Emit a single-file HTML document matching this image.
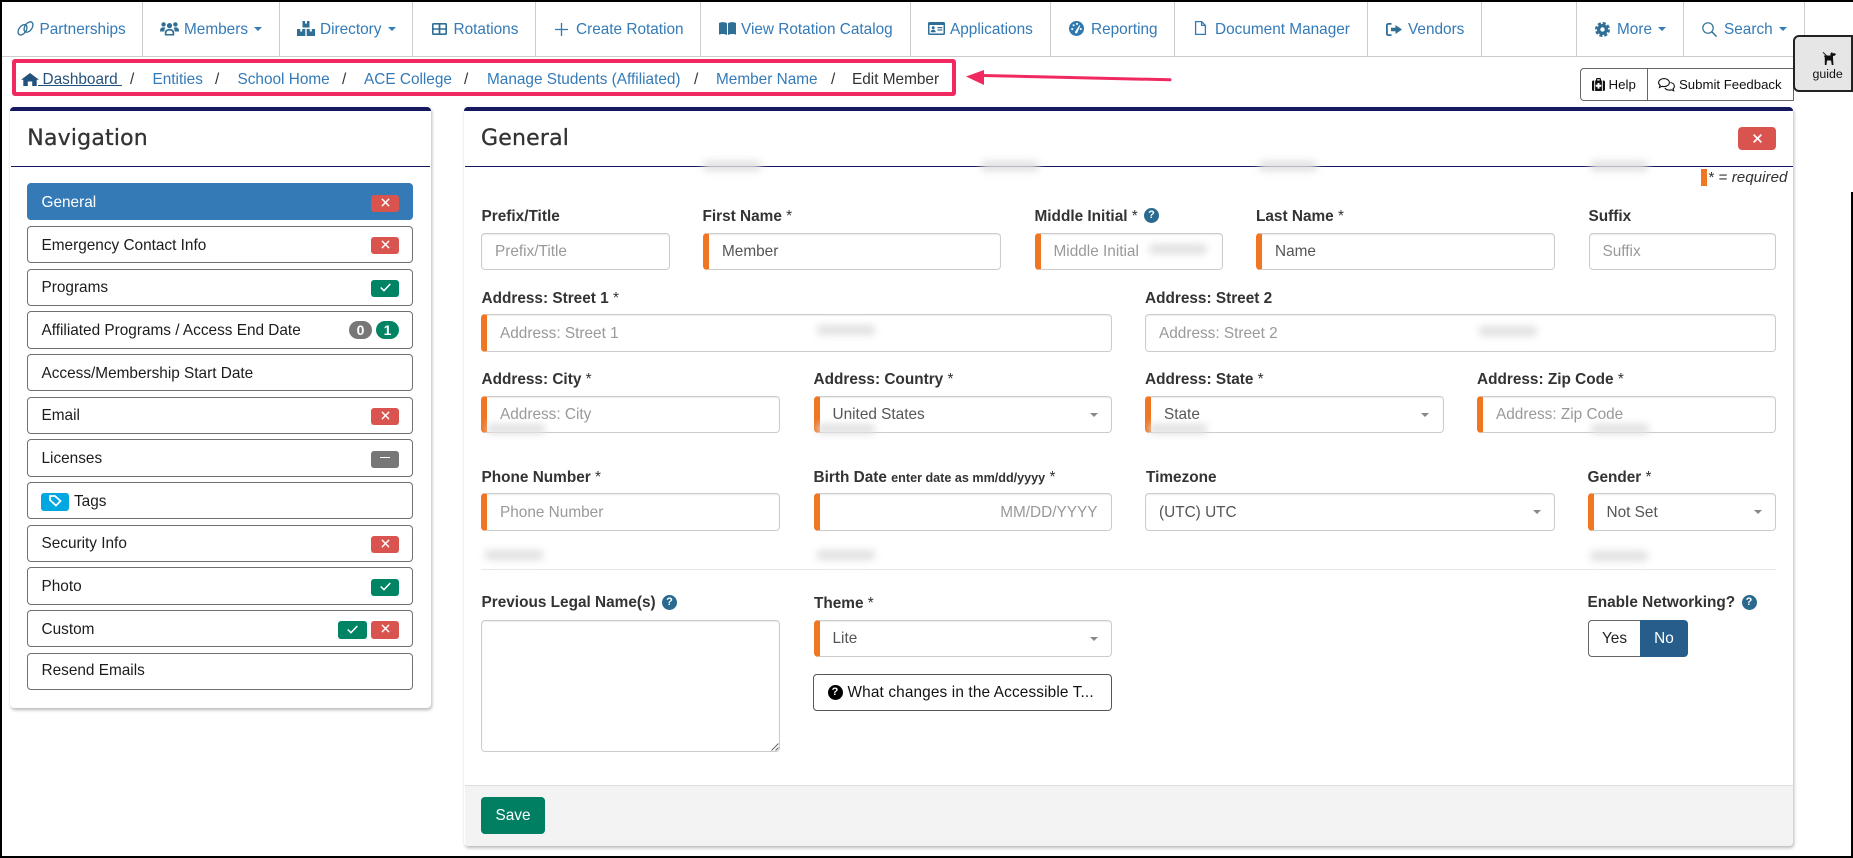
<!DOCTYPE html>
<html lang="en">
<head>
<meta charset="utf-8">
<title>Edit Member</title>
<style>
html,body{margin:0;padding:0;background:#fff}
body{position:relative;width:1853px;height:858px;overflow:hidden;font-family:"Liberation Sans",Arial,sans-serif;font-size:15.36px;color:#333}
*{box-sizing:border-box}
.a{position:absolute}
.t{position:absolute;white-space:nowrap;line-height:20px}
.n{color:#337ab7;top:20px}
.v{position:absolute;top:2px;width:1px;height:54px;background:#ccc}
.ic{position:absolute;overflow:visible}
.car{position:absolute;width:0;height:0;border-left:4px solid transparent;border-right:4px solid transparent;border-top:4px solid #337ab7;top:27px}
.b{top:70px;color:#337ab7}
.s{top:70px;color:#333}
.panel{position:absolute;background:#fff;border-top:4px solid #16195e;border-radius:4px;box-shadow:1px 2px 3px rgba(0,0,0,.28)}
.it{position:absolute;left:27px;width:386px;border:1px solid #707070;border-radius:4px;color:#1c1c1c}
.it span{position:absolute;left:13.5px;white-space:nowrap;line-height:20px}
.bd{position:absolute;border-radius:3px;width:28px;height:17px}
.r{background:#d9534f}.g{background:#008463}.gr{background:#777}
.c{position:absolute;border-radius:9px;width:23px;height:18px;color:#fff;font-weight:bold;font-size:14px;text-align:center;line-height:18px}
.l{position:absolute;white-space:nowrap;line-height:20px;font-weight:bold;color:#333}
.l i{font-style:normal;font-weight:normal}
.l small{font-size:12.6px}
.i{position:absolute;border:1px solid #ccc;border-radius:4px;padding-left:13px;color:#999;white-space:nowrap;box-shadow:inset 0 1px 1px rgba(0,0,0,.075);background:#fff}
.q{border-left:6px solid #f07622}
.val{color:#555}
.sc{position:absolute;width:0;height:0;border-left:4px solid transparent;border-right:4px solid transparent;border-top:4px solid #888}
.h{position:absolute;width:15px;height:15px;border-radius:50%;background:#2a6a8f;color:#fff;font-weight:bold;font-size:11px;line-height:15px;text-align:center}
.sm{position:absolute;height:10px;width:58px;background:#e0e0e0;filter:blur(4px);border-radius:4px}
.ttl{font-family:'DejaVu Sans',sans-serif;font-size:22px;line-height:28px;color:#333;letter-spacing:.2px;-webkit-text-stroke:.3px #333}
</style>
</head>
<body>

<!-- screenshot frame -->
<div class="a" style="left:0;top:0;width:1853px;height:2px;background:#000"></div>
<div class="a" style="left:0;top:0;width:2px;height:858px;background:#000"></div>
<div class="a" style="left:0;top:856px;width:1853px;height:2px;background:#000"></div>
<div class="a" style="left:1851px;top:192px;width:2px;height:666px;background:#000"></div>

<!-- top nav -->
<div class="a" style="left:2px;top:55.5px;width:1803px;height:1px;background:#ccc"></div>
<div class="v" style="left:142px"></div>
<div class="v" style="left:279px"></div>
<div class="v" style="left:412px"></div>
<div class="v" style="left:535px"></div>
<div class="v" style="left:700px"></div>
<div class="v" style="left:910px"></div>
<div class="v" style="left:1050px"></div>
<div class="v" style="left:1174px"></div>
<div class="v" style="left:1367px"></div>
<div class="v" style="left:1481px"></div>
<div class="v" style="left:1576px"></div>
<div class="v" style="left:1683px"></div>
<div class="v" style="left:1804px"></div>

<svg class="ic" style="left:16px;top:21px" width="19" height="15" viewBox="0 0 19 15" fill="none" stroke="#2f6f96" stroke-width="1.300"><ellipse cx="6.500" cy="8.800" rx="3.600" ry="5.800" transform="rotate(35 6.500 8.800)"/><ellipse cx="12.500" cy="6" rx="3.600" ry="5.800" transform="rotate(35 12.500 6)"/></svg>
<div class="t n" style="left:39.5px">Partnerships</div>

<svg class="ic" style="left:160px;top:21px" width="19" height="15" viewBox="0 0 19 15" fill="#2f6f96"><circle cx="3.600" cy="3.400" r="2.200"/><circle cx="15.400" cy="3.400" r="2.200"/><circle cx="9.500" cy="4.600" r="2.600"/><path d="M0 10.500C0 7.500 1 6.400 3.600 6.400c.9 0 1.400.2 1.800.5-.9 1-1.100 2.300-1.100 3.600z"/><path d="M19 10.500C19 7.500 18 6.400 15.400 6.400c-.9 0-1.400.2-1.800.5.9 1 1.100 2.300 1.100 3.600z"/><path d="M4.800 14.500v-2.700c0-2.500 1.600-3.800 4.700-3.800s4.700 1.300 4.700 3.800v2.700z"/><path d="M6.500 13V11.800c0-1.500 1-2.200 3-2.200s3 .7 3 2.200V13z" fill="#fff"/></svg>
<div class="t n" style="left:184px">Members</div>
<div class="car" style="left:254px"></div>

<svg class="ic" style="left:297px;top:21px" width="18" height="15" viewBox="0 0 18 15" fill="#2f6f96"><path d="M5.500 0h7v6.500h-7z"/><path d="M0 8h8.300v7H0zM9.700 8H18v7H9.700z"/><path d="M8 0h2v2.500H8zM3.200 8h2v2.500h-2zM12.800 8h2v2.500h-2z" fill="#fff"/></svg>
<div class="t n" style="left:320px">Directory</div>
<div class="car" style="left:388px"></div>

<svg class="ic" style="left:432px;top:23px" width="15" height="12" viewBox="0 0 15 12"><rect width="15" height="12" rx="1.500" fill="#2f6f96"/><path d="M1.600 1.600h5v3.700h-5zM8.400 1.600h5v3.700h-5zM1.600 6.800h5v3.600h-5zM8.400 6.800h5v3.600h-5z" fill="#fff"/></svg>
<div class="t n" style="left:453.5px">Rotations</div>

<svg class="ic" style="left:555px;top:23px" width="13" height="13" viewBox="0 0 13 13" stroke="#2f78b0" stroke-width="1.300"><path d="M6.500 0v13M0 6.500h13"/></svg>
<div class="t n" style="left:576px">Create Rotation</div>

<svg class="ic" style="left:719px;top:22px" width="17" height="13" viewBox="0 0 17 13" fill="#2f6f96"><path d="M0 1C2.500-.2 5.800-.2 8 1.200V13C5.800 11.700 2.500 11.700 0 12.600zM17 1C14.500-.2 11.200-.2 9 1.200V13c2.200-1.300 5.500-1.300 8-.4z"/></svg>
<div class="t n" style="left:741px">View Rotation Catalog</div>

<svg class="ic" style="left:928px;top:22px" width="17" height="13" viewBox="0 0 17 13"><rect width="17" height="13" rx="1.500" fill="#2f6f96"/><rect x="1.500" y="3" width="14" height="8.500" fill="#fff"/><circle cx="5.200" cy="5.700" r="1.500" fill="#2f6f96"/><path d="M2.700 10.300c0-1.600 1-2.500 2.500-2.500s2.500.9 2.500 2.500zM9.500 5h4.800v1.200H9.500zM9.500 7.400h4.800v1.200H9.500z" fill="#2f6f96"/></svg>
<div class="t n" style="left:950px">Applications</div>

<svg class="ic" style="left:1068.500px;top:21px" width="15" height="15" viewBox="0 0 14 14"><circle cx="7" cy="7" r="7" fill="#2f78b0"/><g fill="#fff"><circle cx="3" cy="7.500" r="1"/><circle cx="4.300" cy="4" r="1"/><circle cx="7.500" cy="2.700" r="1"/><circle cx="11" cy="7.500" r="1"/><path d="M6 9.500L9.800 3.800l.7.400L8 10.300a1.200 1.200 0 1 1-2-.8z"/></g></svg>
<div class="t n" style="left:1091px">Reporting</div>

<svg class="ic" style="left:1195px;top:21px" width="11" height="14" viewBox="0 0 11 14" fill="none" stroke="#337ab7" stroke-width="1.300"><path d="M.6.600h6l3.800 3.800v9H.6zM6.600.6v3.800h3.800"/></svg>
<div class="t n" style="left:1215px">Document Manager</div>

<svg class="ic" style="left:1386px;top:22.500px" width="16" height="13" viewBox="0 0 16 13" fill="#2f6f96"><path d="M5.500 0H2.500C1 0 0 1 0 2.500v8C0 12 1 13 2.500 13h3v-1.800h-3c-.4 0-.7-.3-.7-.7v-8c0-.4.300-.7.700-.7h3z"/><path d="M9.500 2L16 6.500 9.500 11V8.300H5V4.700h4.500z"/></svg>
<div class="t n" style="left:1408px">Vendors</div>

<svg class="ic" style="left:1595px;top:21.500px" width="15" height="15" viewBox="0 0 15 15"><circle cx="7.500" cy="7.500" r="5.500" fill="#2f6f96"/><circle cx="7.500" cy="7.500" r="6.200" fill="none" stroke="#2f6f96" stroke-width="2.600" stroke-dasharray="3 1.870"/><circle cx="7.500" cy="7.500" r="2.200" fill="#fff"/></svg>
<div class="t n" style="left:1617px">More</div>
<div class="car" style="left:1658px"></div>

<svg class="ic" style="left:1702px;top:21.500px" width="15" height="15" viewBox="0 0 15 15" fill="none" stroke="#2f6f96" stroke-width="1.200"><circle cx="6" cy="6" r="5.200"/><path d="M9.800 9.800l4.800 4.800" stroke-width="1.400"/></svg>
<div class="t n" style="left:1724px">Search</div>
<div class="car" style="left:1779px"></div>

<!-- breadcrumb -->
<div class="a" style="left:12px;top:59px;width:944px;height:37px;border:4px solid #f02a61;border-radius:3px"></div>
<svg class="ic" style="left:20.500px;top:72.500px" width="18" height="13" viewBox="0 0 18 13" fill="#23527c"><path d="M9 0l9 6.800h-2.300V13h-4.500V8.500H6.800V13H2.300V6.800H0z"/></svg>
<div class="t" style="left:42.500px;top:70px;color:#23527c">Dashboard</div>
<div class="a" style="left:38px;top:85px;width:84px;height:1px;background:#23527c"></div>
<div class="t s" style="left:130px">/</div>
<div class="t b" style="left:152.500px">Entities</div>
<div class="t s" style="left:215px">/</div>
<div class="t b" style="left:237.500px">School Home</div>
<div class="t s" style="left:342px">/</div>
<div class="t b" style="left:364px">ACE College</div>
<div class="t s" style="left:464px">/</div>
<div class="t b" style="left:487px">Manage Students (Affiliated)</div>
<div class="t s" style="left:694px">/</div>
<div class="t b" style="left:716px">Member Name</div>
<div class="t s" style="left:831px">/</div>
<div class="t" style="left:852px;top:70px;color:#333">Edit Member</div>

<!-- arrow -->
<svg class="ic" style="left:960px;top:65px" width="220" height="26" viewBox="0 0 220 26"><path d="M22 10.500L210 14.800" stroke="#f02a61" stroke-width="3" stroke-linecap="round"/><path d="M6 11.500L24 5v15z" fill="#f02a61"/></svg>

<!-- help buttons -->
<div class="a" style="left:1580px;top:68px;width:214px;height:33px;border:1px solid #666;border-radius:4px 0 0 4px;background:#fff"></div>
<div class="a" style="left:1647px;top:68px;width:1px;height:33px;background:#666"></div>
<svg class="ic" style="left:1591.500px;top:78px" width="13" height="13" viewBox="0 0 13 13"><path d="M4 2.500V1.200C4 .5 4.500 0 5.200 0h2.600C8.500 0 9 .5 9 1.200v1.300H7.800V1.200H5.200v1.300z" fill="#111"/><rect y="2.500" width="13" height="10.500" rx="1.500" fill="#111"/><path d="M5.500 5h2v1.800h1.800v2H7.500v1.800h-2V8.800H3.700v-2h1.800z" fill="#fff"/><path d="M2.200 2.500h.9V13h-.9zM9.900 2.500h.9V13h-.9z" fill="#fff"/></svg>
<div class="t" style="left:1608.500px;top:74.500px;font-size:13.300px;color:#111">Help</div>
<svg class="ic" style="left:1658px;top:78px" width="17" height="14" viewBox="0 0 17 14" fill="none" stroke="#111" stroke-width="1.100"><path d="M6 .6c3 0 5.400 1.800 5.400 4s-2.400 4-5.400 4c-.7 0-1.400-.1-2-.3L1.500 9.500l.7-2.200C1.200 6.600.6 5.600.6 4.600c0-2.200 2.400-4 5.400-4z"/><path d="M12.400 4.500c2.300.3 4 1.800 4 3.700 0 1-.5 1.900-1.300 2.500l.6 2.100-2.300-1c-.6.200-1.300.3-2 .3-2 0-3.700-.9-4.500-2.200"/></svg>
<div class="t" style="left:1679px;top:74.500px;font-size:13.200px;color:#111">Submit Feedback</div>

<!-- guide -->
<div class="a" style="left:1793px;top:35px;width:60px;height:57px;background:#e6e6e6;border:2px solid #222;border-radius:6px 0 0 6px"></div>
<svg class="ic" style="left:1821.500px;top:52px" width="14" height="13" viewBox="0 0 14 13" fill="#111"><path d="M8.500 1.500L10 0l.6 1.200H13l1 1.300-1.500 1.300-1.500.2V6.500L11.500 13H9.800L9 8.500H5L4.500 13H2.800V6L2 3.500h6.500z"/><path d="M1 .3l3.500 3.400" stroke="#111" stroke-width="1" fill="none"/></svg>
<div class="t" style="left:1812.500px;top:64px;font-size:12.400px;color:#111">guide</div>

<!-- navigation panel -->
<div class="panel" style="left:10px;top:107px;width:421px;height:601px"></div>
<div class="a" style="left:11px;top:166px;width:419px;height:1px;background:#16195e"></div>
<div class="t ttl" style="left:27.300px;top:125px">Navigation</div>

<div class="it" style="top:183px;height:37px;background:#337ab7;border-color:#337ab7;color:#fff"><span style="top:9px">General</span></div>
<div class="it" style="top:226px;height:37px"><span style="top:8.500px">Emergency Contact Info</span></div>
<div class="it" style="top:269px;height:37px"><span style="top:7.500px">Programs</span></div>
<div class="it" style="top:311px;height:38px"><span style="top:8.500px">Affiliated Programs / Access End Date</span></div>
<div class="it" style="top:354px;height:37px"><span style="top:8.500px">Access/Membership Start Date</span></div>
<div class="it" style="top:397px;height:37px"><span style="top:7.500px">Email</span></div>
<div class="it" style="top:439px;height:38px"><span style="top:8.500px">Licenses</span></div>
<div class="it" style="top:482px;height:37px"><span style="top:8.500px;left:46px">Tags</span></div>
<div class="it" style="top:525px;height:37px"><span style="top:7.500px">Security Info</span></div>
<div class="it" style="top:567px;height:38px"><span style="top:8.500px">Photo</span></div>
<div class="it" style="top:610px;height:37px"><span style="top:8.500px">Custom</span></div>
<div class="it" style="top:653px;height:37px"><span style="top:7px">Resend Emails</span></div>

<!-- nav badges -->
<div class="bd r" style="left:371px;top:195px"><svg class="a" style="left:9.500px;top:3px" width="9" height="9" viewBox="0 0 10 9" stroke="#fff" stroke-width="1.600"><path d="M1 .5l8 8M9 .5l-8 8"/></svg></div>
<div class="bd r" style="left:371px;top:237px"><svg class="a" style="left:9.500px;top:3px" width="9" height="9" viewBox="0 0 10 9" stroke="#fff" stroke-width="1.600"><path d="M1 .5l8 8M9 .5l-8 8"/></svg></div>
<div class="bd g" style="left:371px;top:280px"><svg class="a" style="left:8.500px;top:3px" width="11" height="9" viewBox="0 0 11 9" fill="none" stroke="#fff" stroke-width="1.500"><path d="M.7 4.500l3.300 3.200L10.300 1"/></svg></div>
<div class="c gr" style="left:349px;top:321px">0</div>
<div class="c g" style="left:376px;top:321px">1</div>
<div class="bd r" style="left:371px;top:408px"><svg class="a" style="left:9.500px;top:3px" width="9" height="9" viewBox="0 0 10 9" stroke="#fff" stroke-width="1.600"><path d="M1 .5l8 8M9 .5l-8 8"/></svg></div>
<div class="bd gr" style="left:371px;top:451px"><div class="a" style="left:9px;top:5.500px;width:10px;height:1.500px;background:#fff"></div></div>
<div class="bd" style="left:41px;top:493px;height:18px;background:#00a7e1"><svg class="a" style="left:8px;top:2px" width="13" height="12" viewBox="0 0 13 12" fill="none" stroke="#fff" stroke-width="1.800"><path d="M1 1h5l5.500 5-4.500 4.500L1 5z"/></svg></div>
<div class="bd r" style="left:371px;top:536px"><svg class="a" style="left:9.500px;top:3px" width="9" height="9" viewBox="0 0 10 9" stroke="#fff" stroke-width="1.600"><path d="M1 .5l8 8M9 .5l-8 8"/></svg></div>
<div class="bd g" style="left:371px;top:579px"><svg class="a" style="left:8.500px;top:3px" width="11" height="9" viewBox="0 0 11 9" fill="none" stroke="#fff" stroke-width="1.500"><path d="M.7 4.500l3.300 3.200L10.300 1"/></svg></div>
<div class="bd g" style="left:338px;top:621px;width:29px;height:18px"><svg class="a" style="left:9px;top:3.500px" width="11" height="9" viewBox="0 0 11 9" fill="none" stroke="#fff" stroke-width="1.500"><path d="M.7 4.500l3.300 3.200L10.300 1"/></svg></div>
<div class="bd r" style="left:371px;top:621px;height:18px"><svg class="a" style="left:9.500px;top:3px" width="9" height="9" viewBox="0 0 10 9" stroke="#fff" stroke-width="1.600"><path d="M1 .5l8 8M9 .5l-8 8"/></svg></div>

<!-- general panel -->
<div class="panel" style="left:464px;top:107px;width:1329px;height:739px"></div>
<div class="a" style="left:465px;top:166px;width:1328px;height:1px;background:#16195e"></div>
<div class="t ttl" style="left:481px;top:125px">General</div>
<div class="a" style="left:1738px;top:127px;width:38px;height:23px;background:#d9534f;border-radius:4px"><svg class="a" style="left:14.500px;top:6.500px" width="9" height="9" viewBox="0 0 10 10" stroke="#fff" stroke-width="1.800"><path d="M.7.700l8.600 8.600M9.300.7L.7 9.300"/></svg></div>

<div class="a" style="left:1701px;top:169px;width:6px;height:17px;background:#f07622"></div>
<div class="t" style="left:1708.500px;top:168px;font-size:15.200px;color:#333">* = <em>required</em></div>

<!-- row 1 -->
<div class="l" style="left:481.500px;top:207px">Prefix/Title</div>
<div class="l" style="left:702.500px;top:207px">First Name <i>*</i></div>
<div class="l" style="left:1034.500px;top:207px">Middle Initial <i>*</i></div>
<div class="h" style="left:1144px;top:208px">?</div>
<div class="l" style="left:1256px;top:207px">Last Name <i>*</i></div>
<div class="l" style="left:1588.500px;top:207px">Suffix</div>
<div class="i" style="left:481px;top:233px;width:189px;height:37px;line-height:35px">Prefix/Title</div>
<div class="i q val" style="left:703px;top:233px;width:298px;height:37px;line-height:35px">Member</div>
<div class="i q" style="left:1034.500px;top:233px;width:188px;height:37px;line-height:35px">Middle Initial</div>
<div class="i q val" style="left:1256px;top:233px;width:299px;height:37px;line-height:35px">Name</div>
<div class="i" style="left:1588.500px;top:233px;width:187px;height:37px;line-height:35px">Suffix</div>

<!-- row 2 -->
<div class="l" style="left:481.500px;top:289px">Address: Street 1 <i>*</i></div>
<div class="l" style="left:1145px;top:289px">Address: Street 2</div>
<div class="i q" style="left:481px;top:314px;width:631px;height:38px;line-height:38px">Address: Street 1</div>
<div class="i" style="left:1145px;top:314px;width:631px;height:38px;line-height:38px">Address: Street 2</div>

<!-- row 3 -->
<div class="l" style="left:481.500px;top:370px">Address: City <i>*</i></div>
<div class="l" style="left:813.500px;top:370px">Address: Country <i>*</i></div>
<div class="l" style="left:1145px;top:370px">Address: State <i>*</i></div>
<div class="l" style="left:1477px;top:370px">Address: Zip Code <i>*</i></div>
<div class="i q" style="left:481px;top:396px;width:299px;height:37px;line-height:35px">Address: City</div>
<div class="i q val" style="left:813.500px;top:396px;width:298px;height:37px;line-height:35px">United States</div>
<div class="sc" style="left:1089.500px;top:412.500px"></div>
<div class="i q val" style="left:1145px;top:396px;width:299px;height:37px;line-height:35px">State</div>
<div class="sc" style="left:1421px;top:412.500px"></div>
<div class="i q" style="left:1477px;top:396px;width:299px;height:37px;line-height:35px">Address: Zip Code</div>

<!-- row 4 -->
<div class="l" style="left:481.500px;top:468px">Phone Number <i>*</i></div>
<div class="l" style="left:813.500px;top:468px">Birth Date <small>enter date as mm/dd/yyyy</small> <i>*</i></div>
<div class="l" style="left:1146px;top:468px">Timezone</div>
<div class="l" style="left:1587.500px;top:468px">Gender <i>*</i></div>
<div class="i q" style="left:481px;top:493px;width:299px;height:38px;line-height:38px">Phone Number</div>
<div class="i q" style="left:813.500px;top:493px;width:298px;height:38px;line-height:38px;text-align:right;padding-right:13px">MM/DD/YYYY</div>
<div class="i val" style="left:1145px;top:493px;width:410px;height:38px;line-height:38px">(UTC) UTC</div>
<div class="sc" style="left:1532.500px;top:510px"></div>
<div class="i q val" style="left:1587.500px;top:493px;width:188px;height:38px;line-height:38px">Not Set</div>
<div class="sc" style="left:1753.500px;top:510px"></div>

<div class="a" style="left:481px;top:569px;width:1295px;height:1px;background:#e8e8e8"></div>

<!-- row 5 -->
<div class="l" style="left:481.500px;top:593px">Previous Legal Name(s)</div>
<div class="h" style="left:662px;top:595px">?</div>
<div class="l" style="left:814px;top:594px">Theme <i>*</i></div>
<div class="l" style="left:1587.500px;top:593px">Enable Networking?</div>
<div class="h" style="left:1741.500px;top:595px">?</div>
<div class="i" style="left:481px;top:620px;width:299px;height:132px"></div>
<svg class="ic" style="left:771px;top:743px" width="8" height="8" viewBox="0 0 8 8" stroke="#666" stroke-width="1" fill="none"><path d="M.5 7.500l7-7M4.500 7.500l3-3"/></svg>
<div class="i q val" style="left:813.500px;top:620px;width:298px;height:37px;line-height:35px">Lite</div>
<div class="sc" style="left:1089.500px;top:637px"></div>
<div class="a" style="left:813px;top:674px;width:298.500px;height:37px;border:1px solid #555;border-radius:4px;background:#fff"></div>
<div class="a" style="left:827.500px;top:685px;width:15px;height:15px;border-radius:50%;background:#000;color:#fff;font-weight:bold;font-size:11px;line-height:15px;text-align:center">?</div>
<div class="t" style="left:847.500px;top:682.500px;color:#111;letter-spacing:.14px">What changes in the Accessible T...</div>

<div class="a" style="left:1587.500px;top:620px;width:53px;height:37px;border:1px solid #666;border-right:0;border-radius:4px 0 0 4px;background:#fff;color:#222;line-height:35px;text-align:center">Yes</div>
<div class="a" style="left:1640px;top:620px;width:48px;height:37px;background:#265d8a;border-radius:0 4px 4px 0;color:#fff;line-height:37px;text-align:center">No</div>

<!-- footer -->
<div class="a" style="left:465px;top:785px;width:1328px;height:61px;background:#f3f3f3;border-top:1px solid #ddd;border-radius:0 0 4px 4px"></div>
<div class="a" style="left:481px;top:797px;width:64px;height:37px;background:#007f62;border-radius:4px;color:#fff;line-height:37px;text-align:center">Save</div>

<!-- blurred redactions -->
<div class="sm" style="left:703px;top:161px"></div>
<div class="sm" style="left:981px;top:161px"></div>
<div class="sm" style="left:1259px;top:161px"></div>
<div class="sm" style="left:1590px;top:161px"></div>
<div class="sm" style="left:1149px;top:244px"></div>
<div class="sm" style="left:817px;top:325px"></div>
<div class="sm" style="left:1479px;top:326px"></div>
<div class="sm" style="left:487px;top:424px"></div>
<div class="sm" style="left:817px;top:424px"></div>
<div class="sm" style="left:1149px;top:424px"></div>
<div class="sm" style="left:1591px;top:424px"></div>
<div class="sm" style="left:485px;top:550px"></div>
<div class="sm" style="left:817px;top:550px"></div>
<div class="sm" style="left:1590px;top:551px"></div>

</body>
</html>
